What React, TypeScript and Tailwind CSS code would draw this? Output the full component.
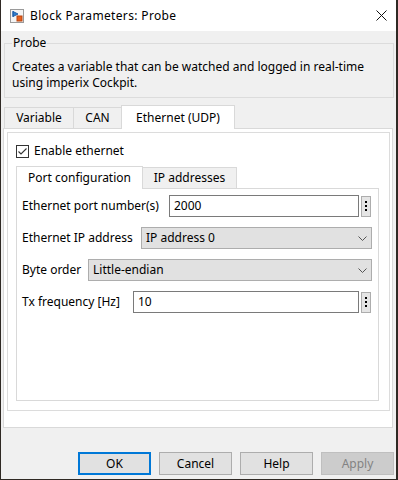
import React from "react";

function BlockIcon() {
    return (
        <svg width="14" height="14" viewBox="0 0 14 14">
            <rect x="0.5" y="0.5" width="13" height="13" fill="#f4f4f4" stroke="#9a9a9a" />
            <path d="M3 2 L3 8 M3 2.5 L8 5 L3 7.5 Z" fill="#2f7fd0" stroke="#1f5fa8" strokeWidth="1" />
            <rect x="7" y="7" width="5" height="5" fill="#e8601c" stroke="#b84410" strokeWidth="1" />
        </svg>
    );
}

function Chevron() {
    return (
        <svg width="9" height="5" viewBox="0 0 9 5">
            <path d="M0.5 0.5 L4.5 4.5 L8.5 0.5" fill="none" stroke="#555" strokeWidth="1" />
        </svg>
    );
}

function DotsButton() {
    return (
        <div className="w-[10px] h-[21px] border border-[#adadad] bg-[#e5e5e5] flex flex-col items-center justify-center gap-[2px]">
            <span className="w-[2px] h-[2px] bg-black" />
            <span className="w-[2px] h-[2px] bg-black" />
            <span className="w-[2px] h-[2px] bg-black" />
        </div>
    );
}

// labelW = distance from label start to the control's left edge
function TextRow({ label, value, labelW }: { label: string; value: string; labelW: string }) {
    return (
        <div className="flex items-center h-[22px]">
            <span className={"whitespace-nowrap shrink-0 " + labelW}>{label}</span>
            <div className="flex-1 h-[22px] border border-[#7a7a7a] bg-white flex items-center pl-[4px]">{value}</div>
            <div className="ml-[2px] mr-[1px]">
                <DotsButton />
            </div>
        </div>
    );
}

function SelectRow({ label, value, labelW }: { label: string; value: string; labelW: string }) {
    return (
        <div className="flex items-center h-[22px]">
            <span className={"whitespace-nowrap shrink-0 " + labelW}>{label}</span>
            <div className="flex-1 h-[22px] border border-[#adadad] bg-[#e1e1e1] flex items-center justify-between pl-[4px] pr-[4px]">
                <span>{value}</span>
                <Chevron />
            </div>
        </div>
    );
}

function DialogButton({ label, primary, disabled }: { label: string; primary?: boolean; disabled?: boolean }) {
    let cls = "w-[73px] h-[23px] flex items-center justify-center ";
    if (primary) cls += "border-2 border-[#0078d7] bg-[#e1e1e1] text-black";
    else if (disabled) cls += "border border-[#bfbfbf] bg-[#cccccc] text-[#838383]";
    else cls += "border border-[#adadad] bg-[#e1e1e1] text-black";
    return <div className={cls}>{label}</div>;
}

export default function App() {
    return (
        <div className="w-[398px] h-[480px] bg-[#2f2924] text-[12px] leading-[16px] text-black" style={{ fontFamily: '"Noto Sans", sans-serif' }}>
            <div className="ml-px w-[395px] h-[479px] bg-[#f0f0f0] flex flex-col">
                {/* title bar */}
                <div className="h-[31px] bg-white flex items-center pl-[9px] pr-[9px]">
                    <BlockIcon />
                    <span className="ml-[6px] flex-1 tracking-[0.35px]">Block Parameters: Probe</span>
                    <svg width="11" height="11" viewBox="0 0 11 11">
                        <path d="M0.5 0.5 L10.5 10.5 M10.5 0.5 L0.5 10.5" stroke="#111" strokeWidth="1" />
                    </svg>
                </div>

                {/* description group */}
                <fieldset className="mt-[4px] ml-[3px] mr-[2px] border border-[#dcdcdc] pl-[7px] pr-[8px] pb-[6px]">
                    <legend className="px-px">Probe</legend>
                    <p className="mt-[8px]">
                        Creates a variable that can be watched and logged in real-time using imperix Cockpit.
                    </p>
                </fieldset>

                {/* tabs */}
                <div className="mt-[7px] ml-[2px] mr-[3px] flex flex-col">
                    <div className="flex items-end pl-px h-[23px]">
                        <div className="w-[70px] h-[21px] border border-b-0 border-[#d9d9d9] flex items-center justify-center">Variable</div>
                        <div className="-ml-px w-[49px] h-[21px] border border-b-0 border-[#d9d9d9] flex items-center justify-center">CAN</div>
                        <div className="-ml-px w-[114px] h-[24px] -mb-px relative bg-white border border-b-0 border-[#d9d9d9] flex items-center justify-center">Ethernet (UDP)</div>
                    </div>
                    <div className="h-[300px] bg-white border border-[#d9d9d9] pt-[3px] pl-[3px] pr-[2px] pb-[16px]">
                        <div className="h-full border border-[#dcdcdc] pl-[8px] pr-[10px] pt-[10px]">
                            <div className="flex items-center">
                                <svg width="13" height="13" viewBox="0 0 13 13">
                                    <rect x="0.5" y="0.5" width="12" height="12" fill="white" stroke="#333" />
                                    <path d="M2.5 6.5 L5 9 L10.5 3.5" fill="none" stroke="#333" strokeWidth="1.1" />
                                </svg>
                                <span className="ml-[5px]">Enable ethernet</span>
                            </div>

                            {/* inner tabs */}
                            <div className="mt-[7px] flex items-end h-[22px]">
                                <div className="w-[127px] h-[23px] -mb-px relative bg-white border border-b-0 border-[#d9d9d9] flex items-center justify-center">Port configuration</div>
                                <div className="-ml-px w-[95px] h-[21px] border border-b-0 border-[#d9d9d9] bg-[#f0f0f0] flex items-center justify-center">IP addresses</div>
                            </div>
                            <div className="h-[213px] border border-[#d9d9d9] pt-[6px] pl-[5px] pr-[6px] flex flex-col gap-[10px]">
                                <TextRow label="Ethernet port number(s)" value="2000" labelW="w-[147px]" />
                                <SelectRow label="Ethernet IP address" value="IP address 0" labelW="w-[119px]" />
                                <SelectRow label="Byte order" value="Little-endian" labelW="w-[66px]" />
                                <TextRow label="Tx frequency [Hz]" value="10" labelW="w-[111px]" />
                            </div>
                        </div>
                    </div>
                </div>

                {/* buttons */}
                <div className="mt-auto mb-[4px] mr-[2px] flex justify-end gap-[8px]">
                    <DialogButton label="OK" primary />
                    <DialogButton label="Cancel" />
                    <DialogButton label="Help" />
                    <DialogButton label="Apply" disabled />
                </div>
            </div>
        </div>
    );
}
